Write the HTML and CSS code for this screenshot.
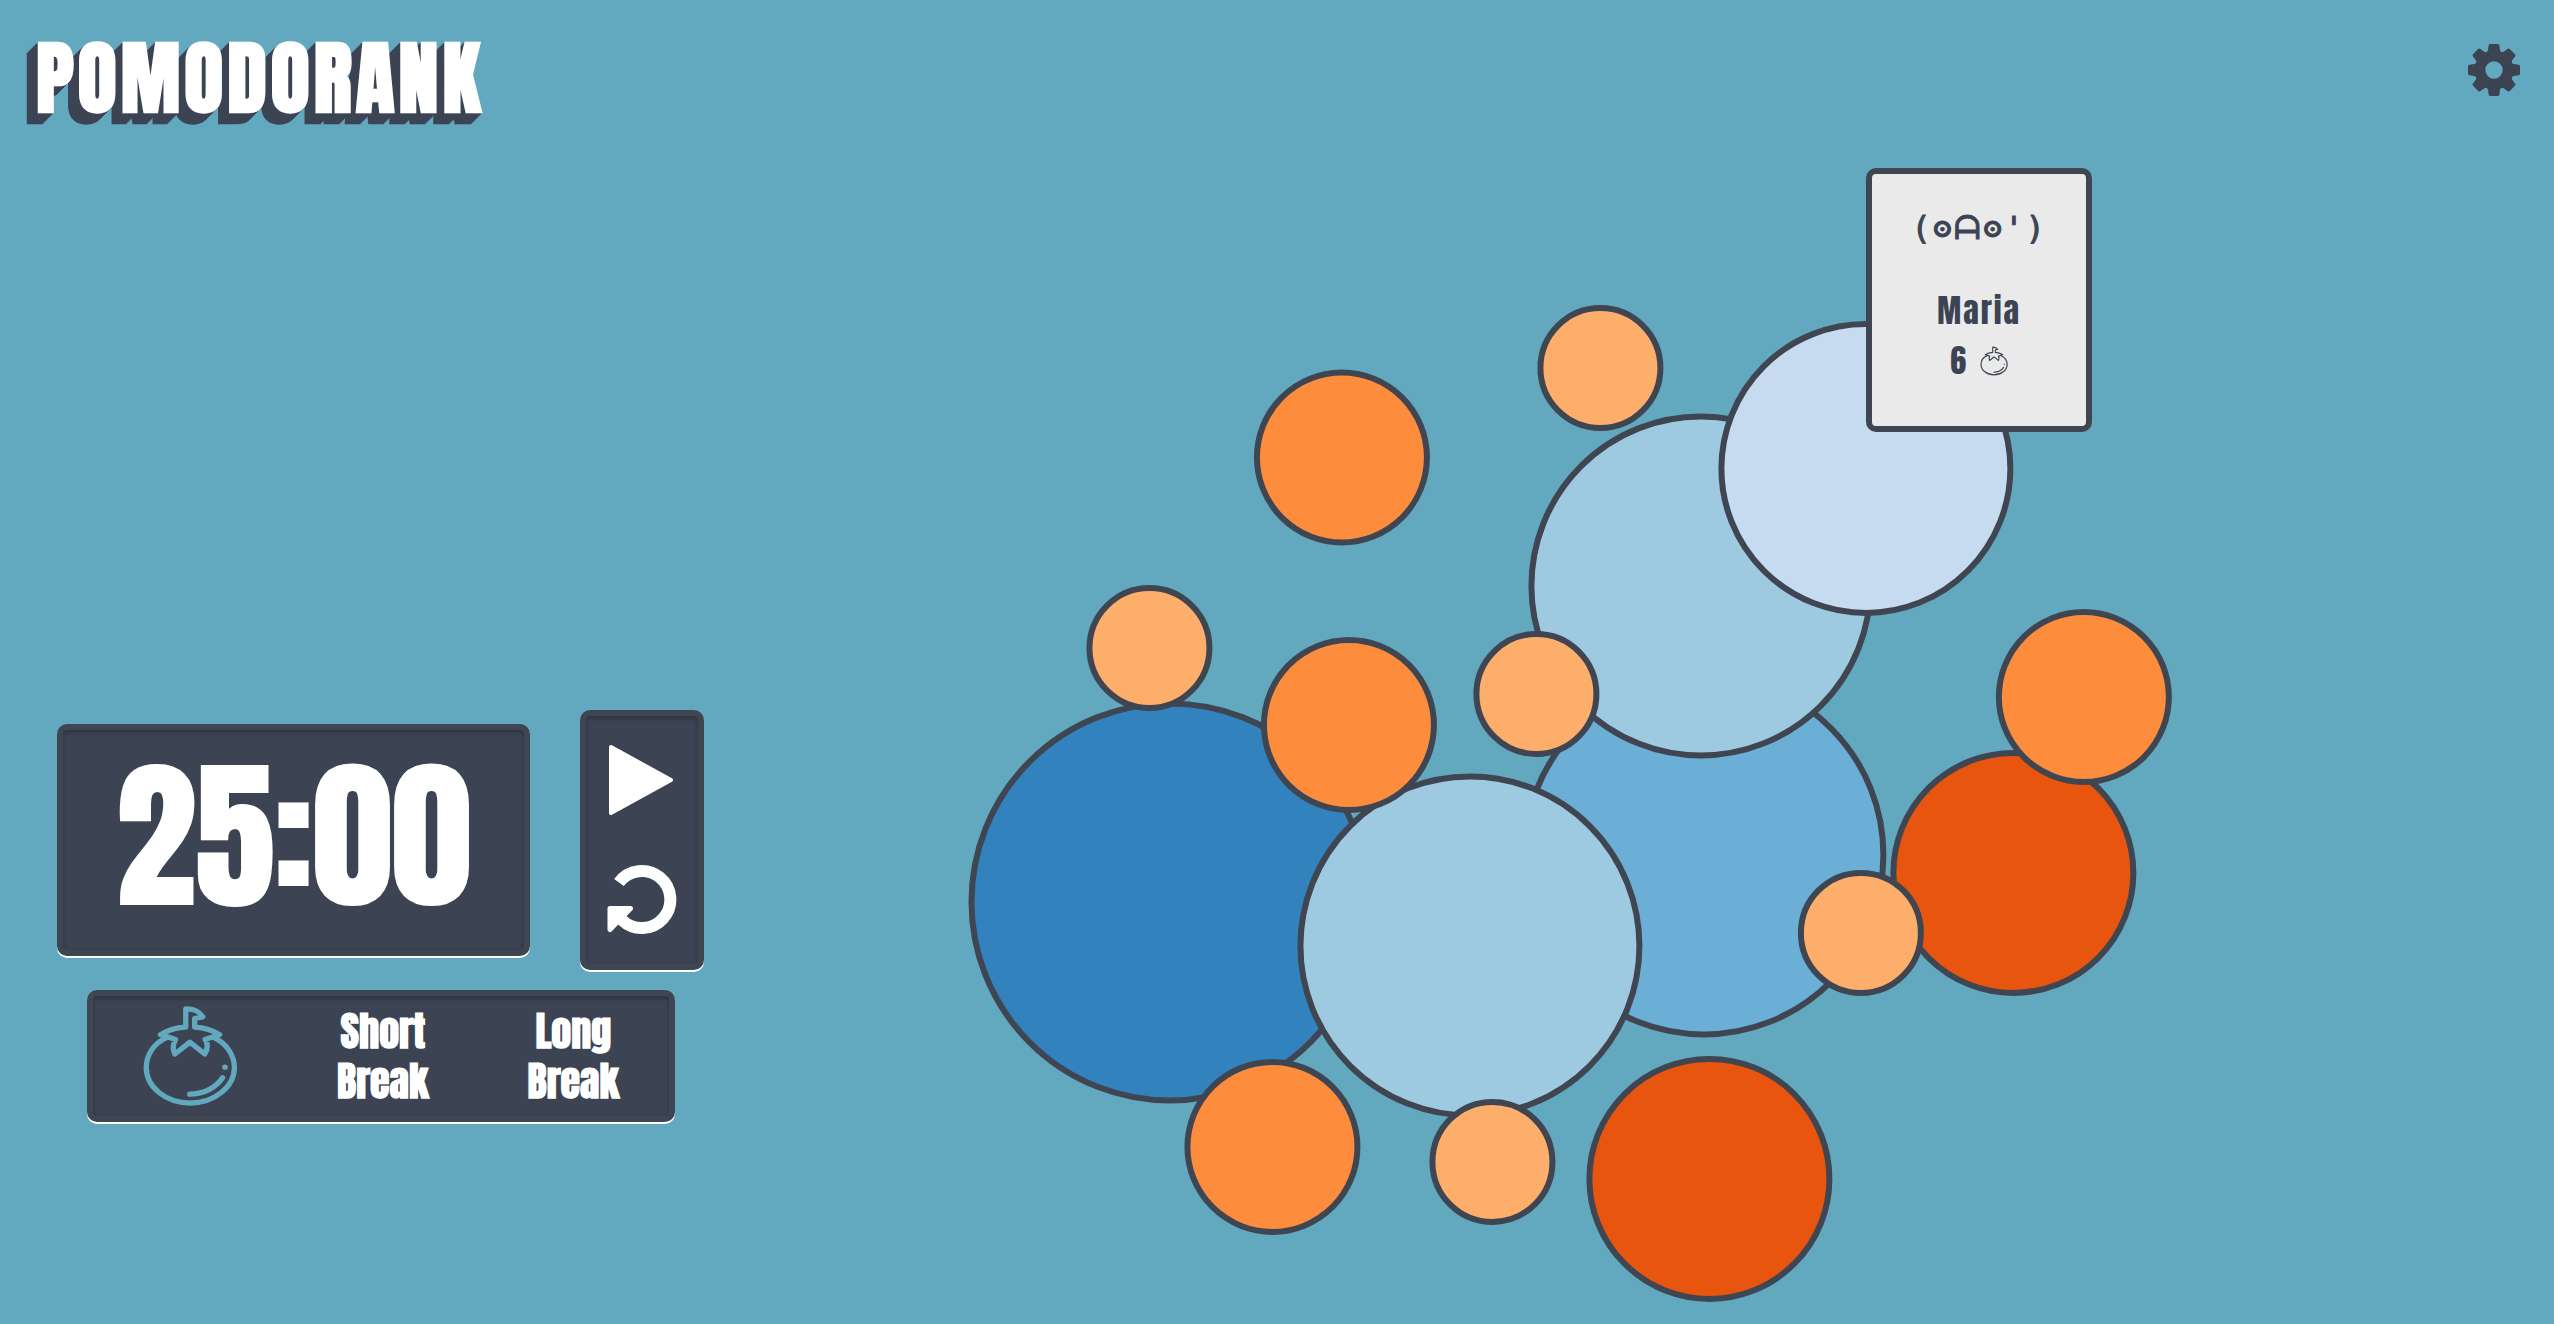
FILE: index.html
```html
<!DOCTYPE html>
<html lang="en">
<head>
<meta charset="utf-8">
<title>Pomodorank</title>
<link rel="stylesheet" href="styles.css">
</head>
<body>
<svg class="sprite" aria-hidden="true">
  <symbol id="tomato" viewBox="216 106 288 304">
    <path d="M287 203C250 220 227 255 227 293C227 352 286 401 360 401S495 352 495 293C495 255 470 220 435 203"/>
    <path d="M347 170V115C370 114 390 124 399 139L374 144V170C405 172 430 180 450 193L406 208C416 222 412 240 405 252L360 216L314 252C308 240 308 222 316 208L270 193C290 180 315 172 347 170"/>
    <path d="M359 374C405 374 440 352 459 324M466 292h1"/>
  </symbol>
</svg>
<header class="header">
  <h1 class="logo">POMODORANK</h1>
  <button class="icon-button" type="button" aria-label="Settings">
    <svg class="gear" viewBox="-78 -78 156 156" aria-hidden="true">
      <defs><path id="tooth" d="M-11 -78H11Q15 -78 16 -74L18 -59Q20 -54 25 -51L18 -40H-18L-25 -51Q-20 -54 -18 -59L-16 -74Q-15 -78 -11 -78Z"/></defs>
      <circle r="41" class="gear-ring"/>
      <use href="#tooth"/>
      <use href="#tooth" transform="rotate(45)"/>
      <use href="#tooth" transform="rotate(90)"/>
      <use href="#tooth" transform="rotate(135)"/>
      <use href="#tooth" transform="rotate(180)"/>
      <use href="#tooth" transform="rotate(225)"/>
      <use href="#tooth" transform="rotate(270)"/>
      <use href="#tooth" transform="rotate(315)"/>
    </svg>
  </button>
</header>
<main class="main">
  <section class="timer" aria-label="Timer">
    <div class="timer-row">
      <div class="panel clock">25:00</div>
      <div class="panel controls">
        <button class="icon-button" type="button" aria-label="Start">
          <svg class="control-icon" viewBox="0 0 70 70" aria-hidden="true"><path class="solid" d="M4 2L64 35L4 68Z"/></svg>
        </button>
        <button class="icon-button" type="button" aria-label="Reset">
          <svg class="control-icon" viewBox="0 0 70 70" aria-hidden="true"><path class="arc" d="M12 17.500A28.500 28.500 0 1 1 15 55"/><path class="head" d="M3 43.500H23.500L3 64.500Z"/></svg>
        </button>
      </div>
    </div>
    <div class="panel modes">
      <button class="icon-button" type="button" aria-label="Pomodoro"><svg class="tomato-large"><use href="#tomato"/></svg></button>
      <button class="mode" type="button">Short<br>Break</button>
      <button class="mode" type="button">Long<br>Break</button>
    </div>
  </section>
  <section class="chart" aria-label="Ranking">
    <svg class="bubbles" viewBox="0 0 1788 1184" aria-hidden="true">
      <circle class="b11" cx="404" cy="762" r="198.500"/>
      <circle class="b9" cx="938" cy="715" r="179.500"/>
      <circle class="b8" cx="935" cy="446" r="169.500"/>
      <circle class="b8" cx="704" cy="806" r="169.500"/>
      <circle class="b6" cx="1100" cy="328.500" r="144.500"/>
      <circle class="b4" cx="1247.500" cy="733" r="120"/>
      <circle class="b4" cx="943.500" cy="1039" r="120"/>
      <circle class="b2" cx="576" cy="317.500" r="85"/>
      <circle class="b2" cx="583" cy="585" r="85"/>
      <circle class="b2" cx="1318" cy="557" r="85"/>
      <circle class="b2" cx="506.500" cy="1007" r="85"/>
      <circle class="b1" cx="834.500" cy="228" r="60"/>
      <circle class="b1" cx="383.500" cy="508" r="60"/>
      <circle class="b1" cx="770.500" cy="554" r="60"/>
      <circle class="b1" cx="1095" cy="793" r="60"/>
      <circle class="b1" cx="726.500" cy="1022" r="60"/>
    </svg>
    <div class="card">
      <p class="face">(ʘᗩʘ')</p>
      <p class="name">Maria</p>
      <p class="score">6 <svg class="tomato-small" aria-hidden="true"><use href="#tomato"/></svg></p>
    </div>
  </section>
</main>
</body>
</html>
```
FILE: styles.css
```css
:root {
  --sky: #62a9c0;
  --ink: #3c4454;
  --edge: #3f4652;
}

* { box-sizing: border-box; }

body {
  margin: 0;
  min-height: 100vh;
  display: flex;
  flex-direction: column;
  background: var(--sky);
  color: var(--ink);
  font-family: Anton, Impact, sans-serif;
}

svg { display: block; }
.sprite { position: absolute; width: 0; height: 0; }
h1, p { margin: 0; }

button {
  padding: 0;
  border: 0;
  background: none;
  color: inherit;
  font: inherit;
  cursor: pointer;
}

.header {
  display: flex;
  justify-content: space-between;
  align-items: center;
  height: 140px;
  padding: 0 34px 0 36px;
}

.logo {
  padding-top: 16px;
  color: #fff;
  font-size: 80px;
  line-height: 120px;
  letter-spacing: 4px;
  text-shadow:
    -1px 1px var(--ink), -2px 2px var(--ink), -3px 3px var(--ink),
    -4px 4px var(--ink), -5px 5px var(--ink), -6px 6px var(--ink),
    -7px 7px var(--ink), -8px 8px var(--ink), -9px 9px var(--ink),
    -10px 10px var(--ink), -11px 11px var(--ink);
}

.gear { width: 52px; height: 52px; fill: var(--ink); }
.gear-ring { fill: none; stroke: var(--ink); stroke-width: 30; }

.main { flex: 1; display: flex; }

.timer {
  width: 30%;
  display: flex;
  flex-direction: column;
  align-items: center;
  justify-content: flex-end;
  gap: 20px;
  padding: 0 5px 202px 0;
}

.timer-row { display: flex; align-items: center; gap: 50px; }

.panel {
  background: var(--ink);
  border: 6px solid var(--edge);
  border-radius: 10px;
  box-shadow: 0 2px 0 #fff, inset 0 2px 4px rgba(0, 0, 0, 0.3);
  color: #fff;
}

.clock {
  padding: 0 53px 6px;
  font-size: 160px;
  line-height: 214px;
  -webkit-text-stroke: 2px #fff;
}

.controls {
  display: flex;
  flex-direction: column;
  gap: 50px;
  padding: 29px 21px;
}

.control-icon { width: 70px; height: 70px; }
.solid { fill: #fff; stroke: #fff; stroke-width: 4; stroke-linejoin: round; }
.arc { fill: none; stroke: #fff; stroke-width: 12; }
.head { fill: #fff; stroke: #fff; stroke-width: 5; stroke-linejoin: round; }

.modes {
  display: flex;
  justify-content: space-around;
  align-items: center;
  width: 588px;
  padding: 10px 0;
}

.mode { font-size: 40px; font-weight: 700; line-height: 50px; }

.tomato-large, .tomato-small {
  fill: none;
  stroke-linecap: round;
  stroke-linejoin: round;
}

.tomato-large { width: 96px; height: 100px; stroke: var(--sky); stroke-width: 16; }
.tomato-small { width: 28px; height: 30px; stroke: var(--ink); stroke-width: 12; }

.chart { position: relative; flex: 1; }
.bubbles { width: 100%; stroke: var(--edge); stroke-width: 6; }
.b11 { fill: #3182bd; }
.b9 { fill: #6baed6; }
.b8 { fill: #9ecae1; }
.b6 { fill: #c6dbef; }
.b4 { fill: #e8550f; }
.b2 { fill: #fd8d3c; }
.b1 { fill: #fdae6b; }

.card {
  position: absolute;
  left: 1100px;
  top: 28px;
  width: 226px;
  padding: 29px 0 40px;
  display: flex;
  flex-direction: column;
  align-items: center;
  background: #eaeaea;
  border: 6px solid var(--edge);
  border-radius: 10px;
  font-size: 32px;
  line-height: 50px;
  letter-spacing: 2px;
}

.face {
  margin-bottom: 33px;
  font-family: "DejaVu Sans Mono", monospace;
  -webkit-text-stroke: 1px var(--ink);
}

.score { display: flex; align-items: center; gap: 12px; }
```
